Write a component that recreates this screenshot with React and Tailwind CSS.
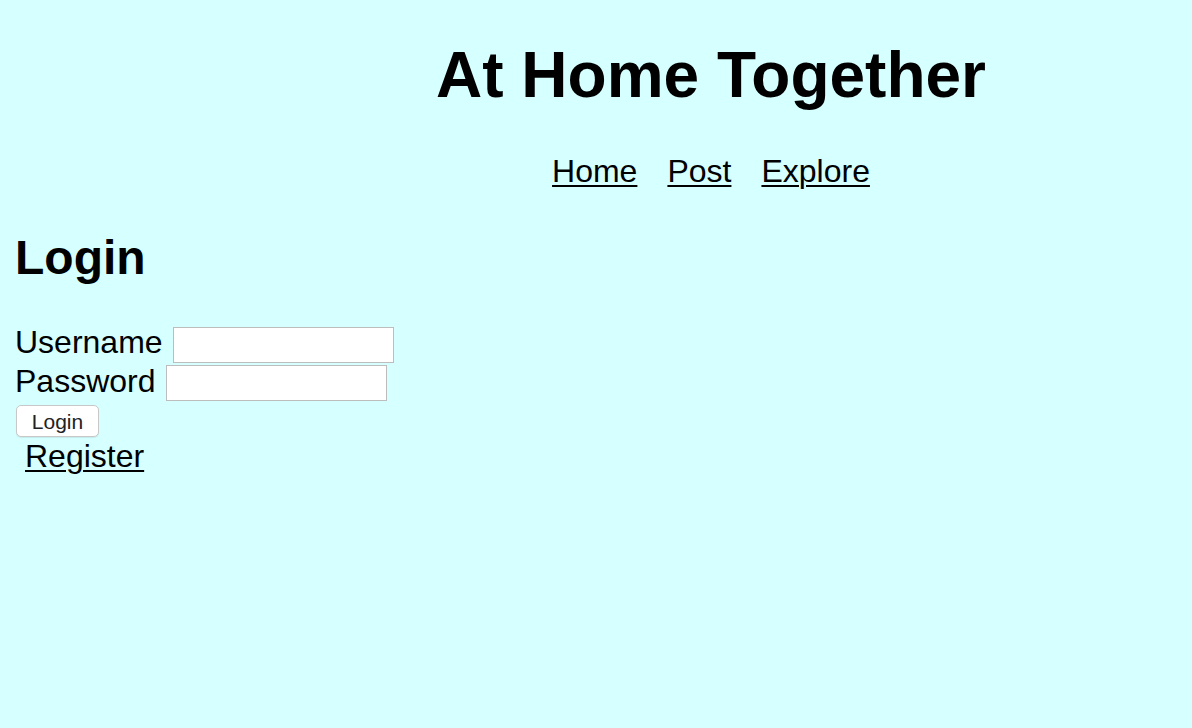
export default function App() {
  return (
    <div className="min-h-screen w-full bg-[#d6ffff] text-black" style={{ fontFamily: '"Liberation Sans", Arial, sans-serif' }}>
      <header className="pl-[230px] flex flex-col items-center">
        <h1 className="mt-[43px] text-[64px] leading-[64px] font-bold">At Home Together</h1>
        <nav className="mt-[48px] flex gap-[30px] text-[32px] leading-[32px]">
          <a href="#" className="underline underline-offset-[3px] decoration-2">Home</a>
          <a href="#" className="underline underline-offset-[3px] decoration-2">Post</a>
          <a href="#" className="underline underline-offset-[3px] decoration-2">Explore</a>
        </nav>
      </header>

      <main className="pl-[15px]">
        <h2 className="mt-[47px] text-[48px] leading-[48px] font-bold">Login</h2>
        <form className="mt-[44px] flex flex-col items-start text-[32px] leading-[32px]">
          <div className="flex items-start h-[39px]">
            <label>Username</label>
            <input type="text" className="ml-[10px] mt-[1px] w-[221px] h-[36px] bg-white border border-[#bdbdbd] outline-none" />
          </div>
          <div className="flex items-start h-[40px]">
            <label>Password</label>
            <input type="password" className="ml-[10px] w-[221px] h-[36px] bg-white border border-[#bdbdbd] outline-none" />
          </div>
          <button type="button" className="ml-[1px] w-[83px] h-[32px] bg-white border border-[#c8c8c8] rounded-[5px] shadow-[0_1px_1px_rgba(0,0,0,0.08)] text-[21px] leading-[21px] text-[#222]">
            Login
          </button>
          <a href="#" className="ml-[10px] mt-[3px] underline underline-offset-[3px] decoration-2">Register</a>
        </form>
      </main>
    </div>
  );
}
